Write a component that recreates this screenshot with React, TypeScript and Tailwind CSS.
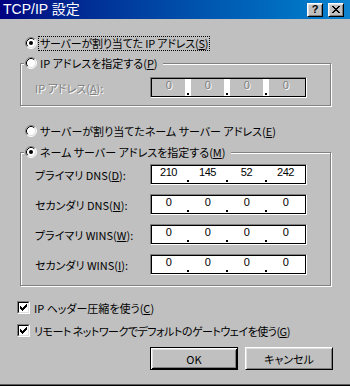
import React, { Fragment } from "react";

const JP = "font-['Noto_Sans_CJK_JP','Noto_Sans',sans-serif] [font-feature-settings:'palt'] text-[11px] leading-[14px]";

function Radio({ checked }: { checked?: boolean }) {
  return (
    <svg width="12" height="12" viewBox="0 0 12 12" className="shrink-0">
      <circle cx="6" cy="6" r="5" fill="#fff" />
      <path d="M2.11 9.89 A5.5 5.5 0 0 1 9.89 2.11" stroke="#808080" strokeWidth="1" fill="none" />
      <path d="M9.89 2.11 A5.5 5.5 0 0 1 2.11 9.89" stroke="#ffffff" strokeWidth="1" fill="none" />
      <path d="M2.82 9.18 A4.5 4.5 0 0 1 9.18 2.82" stroke="#000000" strokeWidth="1" fill="none" />
      <path d="M9.18 2.82 A4.5 4.5 0 0 1 2.82 9.18" stroke="#dfdfdf" strokeWidth="1" fill="none" />
      {checked && <circle cx="6" cy="6" r="2" fill="#000" />}
    </svg>
  );
}

function Check() {
  return (
    <div className="w-[13px] h-[13px] shrink-0 border border-t-[#808080] border-l-[#808080] border-r-white border-b-white">
      <div className="w-full h-full border border-t-black border-l-black border-r-[#dfdfdf] border-b-[#dfdfdf] bg-white">
        <svg width="9" height="9" viewBox="0 0 9 9" shapeRendering="crispEdges">
          <path
            d="M7 1h1v1h-1z M6 2h2v1h-2z M1 3h1v1h-1z M5 3h3v1h-3z M1 4h2v1h-2z M4 4h3v1h-3z M1 5h5v1h-5z M2 6h3v1h-3z M3 7h1v1h-1z"
            fill="#000"
          />
        </svg>
      </div>
    </div>
  );
}

function Key({ k }: { k: string }) {
  return (
    <>
      (<span className="underline underline-offset-[1px]">{k}</span>)
    </>
  );
}

function IpField({ values, disabled }: { values: string[]; disabled?: boolean }) {
  return (
    <div className="w-[157px] h-[21px] shrink-0 border border-t-[#808080] border-l-[#808080] border-r-white border-b-white">
      <div className={`w-full h-full border border-black flex ${disabled ? "bg-[#c0c0c0]" : "bg-white"}`}>
        {values.map((v, i) => (
          <Fragment key={i}>
            {i > 0 && (
              <div className={`w-[6px] h-full flex justify-center items-end pb-[1px] ${disabled ? "bg-white" : ""}`}>
                <div className="w-[2px] h-[2px] bg-black" />
              </div>
            )}
            <div
              className={`w-[33px] flex justify-center font-['Liberation_Sans',sans-serif] text-[11px] leading-[13px] tracking-[-0.4px] ${
                disabled ? "text-[#808080] [text-shadow:1px_1px_0_#fff]" : "text-black"
              }`}
            >
              {v}
            </div>
          </Fragment>
        ))}
      </div>
    </div>
  );
}

function FieldRow({ label, values, disabled }: { label: React.ReactNode; values: string[]; disabled?: boolean }) {
  return (
    <div className="flex items-center">
      <div className={`w-[115px] ${disabled ? "text-[#808080] [text-shadow:1px_1px_0_#fff]" : ""}`}>{label}</div>
      <IpField values={values} disabled={disabled} />
    </div>
  );
}

function Btn({ children, def }: { children: React.ReactNode; def?: boolean }) {
  return (
    <div
      className={`w-[88px] h-[23px] flex items-center justify-center bg-[#c0c0c0] ${
        def
          ? "border border-black shadow-[inset_1px_1px_0_#fff,inset_-1px_-1px_0_#000,inset_2px_2px_0_#dfdfdf,inset_-2px_-2px_0_#808080]"
          : "border border-t-white border-l-white border-r-black border-b-black shadow-[inset_1px_1px_0_#dfdfdf,inset_-1px_-1px_0_#808080]"
      }`}
    >
      {children}
    </div>
  );
}

function TitleBtn({ children }: { children: React.ReactNode }) {
  return (
    <div className="w-[16px] h-[14px] flex items-center justify-center bg-[#c0c0c0] border border-t-white border-l-white border-r-black border-b-black shadow-[inset_1px_1px_0_#dfdfdf,inset_-1px_-1px_0_#808080]">
      {children}
    </div>
  );
}

export default function App() {
  const zeros = ["0", "0", "0", "0"];
  return (
    <div className={`w-[350px] h-[386px] bg-[#c0c0c0] flex flex-col text-black overflow-hidden shadow-[inset_0_-1px_0_#000,inset_0_-2px_0_#606060] ${JP}`}>
      {/* title bar */}
      <div className="h-[19px] shrink-0 flex items-center bg-gradient-to-r from-[#000080] to-[#1084d0] pl-[3px] pr-[6px]">
        <div className="flex-1 text-white font-['Liberation_Sans','Noto_Sans_CJK_JP',sans-serif] text-[14px] leading-[19px] [font-feature-settings:normal]">
          TCP/IP 設定
        </div>
        <div className="flex gap-[5px]">
          <TitleBtn>
            <span className="font-['Liberation_Sans',sans-serif] font-bold text-[11px] leading-[11px] [font-feature-settings:normal]">?</span>
          </TitleBtn>
          <TitleBtn>
            <svg width="8" height="7" viewBox="0 0 8 7" shapeRendering="crispEdges">
              <path
                d="M0 0h2v1h-2z M6 0h2v1h-2z M1 1h2v1h-2z M5 1h2v1h-2z M2 2h4v1h-4z M3 3h2v1h-2z M2 4h4v1h-4z M1 5h2v1h-2z M5 5h2v1h-2z M0 6h2v1h-2z M6 6h2v1h-2z"
                fill="#000"
              />
            </svg>
          </TitleBtn>
        </div>
      </div>

      {/* radio 1 */}
      <div className="mt-[17px] h-[14px] ml-[25px] flex items-center">
        <Radio checked />
        <span className="ml-[1px] px-[1px] border border-dotted border-black leading-[13px] tracking-[-0.2px]">
          サーバーが割り当てた IP アドレス<Key k="S" />
        </span>
      </div>

      {/* group 1 */}
      <fieldset className="mt-[6px] ml-[20px] w-[311px] border border-[#808080] shadow-[1px_1px_0_#fff,inset_1px_1px_0_#fff]">
        <legend className="ml-[3px] pl-[1px] pr-[5px] h-[14px] bg-[#c0c0c0]">
          <div className="flex items-center h-[14px]">
            <Radio />
            <span className="ml-[3px]">
              IP アドレスを指定する<Key k="P" />
            </span>
          </div>
        </legend>
        <div className="pl-[14px] pt-[7px] pb-[7px]">
          <FieldRow
            disabled
            label={
              <>
                IP アドレス<Key k="A" />:
              </>
            }
            values={zeros}
          />
        </div>
      </fieldset>

      {/* radio 3 */}
      <div className="mt-[18px] h-[14px] ml-[25px] flex items-center">
        <Radio />
        <span className="ml-[3px]">
          サーバーが割り当てたネーム サーバー アドレス<Key k="E" />
        </span>
      </div>

      {/* group 2 */}
      <fieldset className="mt-[7px] ml-[20px] w-[311px] border border-[#808080] shadow-[1px_1px_0_#fff,inset_1px_1px_0_#fff]">
        <legend className="ml-[3px] pl-[1px] pr-[5px] h-[14px] bg-[#c0c0c0]">
          <div className="flex items-center h-[14px]">
            <Radio checked />
            <span className="ml-[3px]">
              ネーム サーバー アドレスを指定する<Key k="M" />
            </span>
          </div>
        </legend>
        <div className="pl-[14px] pt-[5px] pb-[10px] flex flex-col gap-[9px]">
          <FieldRow
            label={
              <>
                プライマリ DNS<Key k="D" />:
              </>
            }
            values={["210", "145", "52", "242"]}
          />
          <FieldRow
            label={
              <>
                セカンダリ DNS<Key k="N" />:
              </>
            }
            values={zeros}
          />
          <FieldRow
            label={
              <>
                プライマリ WINS<Key k="W" />:
              </>
            }
            values={zeros}
          />
          <FieldRow
            label={
              <>
                セカンダリ WINS<Key k="I" />:
              </>
            }
            values={zeros}
          />
        </div>
      </fieldset>

      {/* checkboxes */}
      <div className="mt-[15px] h-[13px] ml-[17px] flex items-center">
        <Check />
        <span className="ml-[4px]">
          IP ヘッダー圧縮を使う<Key k="C" />
        </span>
      </div>
      <div className="mt-[10px] h-[13px] ml-[17px] flex items-center">
        <Check />
        <span className="ml-[4px] tracking-[-0.5px]">
          リモート ネットワークでデフォルトのゲートウェイを使う<Key k="G" />
        </span>
      </div>

      {/* buttons */}
      <div className="mt-[10px] ml-[150px] flex gap-[7px]">
        <Btn def>OK</Btn>
        <Btn>キャンセル</Btn>
      </div>
    </div>
  );
}
